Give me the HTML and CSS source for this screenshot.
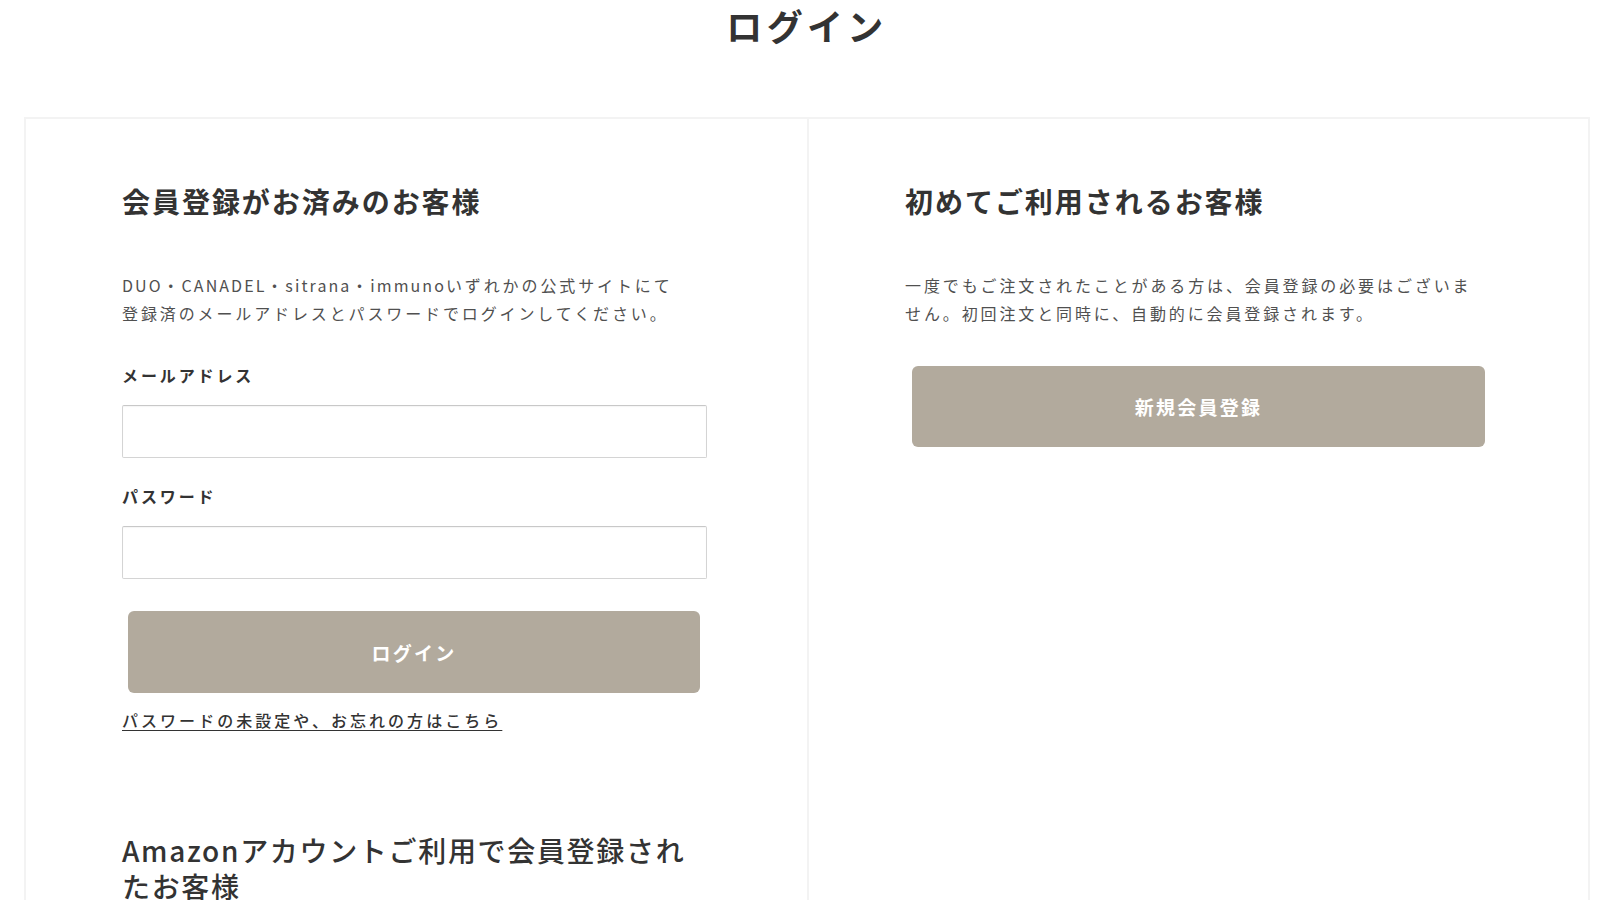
FILE: index.html
```html
<!DOCTYPE html>
<html lang="ja">
<head>
<meta charset="utf-8">
<title>ログイン</title>
<link rel="stylesheet" href="styles.css">
</head>
<body>
<main class="page">
  <h1 class="page-title">ログイン</h1>
  <div class="panels">
    <section class="panel">
      <h2 class="panel-heading">会員登録がお済みのお客様</h2>
      <p class="panel-text"><span class="latin">DUO</span>・<span class="latin">CANADEL</span>・<span class="latin">sitrana</span>・<span class="latin">immuno</span>いずれかの公式サイトにて<br>登録済のメールアドレスとパスワードでログインしてください。</p>
      <form class="login-form">
        <label class="field-label" for="email">メールアドレス</label>
        <input class="field-input" id="email" type="email">
        <label class="field-label field-label-second" for="password">パスワード</label>
        <input class="field-input" id="password" type="password">
        <button class="btn btn-login" type="button">ログイン</button>
      </form>
      <a class="forgot-link" href="#">パスワードの未設定や、お忘れの方はこちら</a>
      <h2 class="panel-heading amazon-heading">Amazonアカウントご利用で会員登録されたお客様</h2>
    </section>
    <section class="panel">
      <h2 class="panel-heading">初めてご利用されるお客様</h2>
      <p class="panel-text">一度でもご注文されたことがある方は、会員登録の必要はございません。初回注文と同時に、自動的に会員登録されます。</p>
      <button class="btn btn-register" type="button">新規会員登録</button>
    </section>
  </div>
</main>
</body>
</html>
```
FILE: styles.css
```css
html, body {
  margin: 0;
  padding: 0;
  background: #ffffff;
}
body {
  font-family: "Noto Sans CJK JP", "Noto Sans", sans-serif;
  color: #333333;
}
.page {
  padding: 0 10px 0 24px;
}
.page-title {
  margin: 0 0 67px;
  font-size: 36px;
  line-height: 50px;
  font-weight: 700;
  letter-spacing: 0.12em;
  text-align: center;
  color: #333333;
}
.panels {
  display: grid;
  grid-template-columns: 1fr 1fr;
  border: 2px solid #f3f3f3;
  border-bottom: none;
  min-height: 800px;
}
.panel {
  padding: 62px 96px 0;
}
.panel + .panel {
  border-left: 2px solid #f3f3f3;
}
.panel-heading {
  margin: 0;
  font-size: 28px;
  line-height: 40px;
  font-weight: 700;
  letter-spacing: 0.07em;
  color: #333333;
  max-width: 590px;
}
.panel-text {
  margin: 50px 0 0;
  font-size: 16px;
  line-height: 28px;
  letter-spacing: 0.18em;
  color: #505050;
  max-width: 580px;
}
.latin {
  letter-spacing: 0.13em;
}
.login-form {
  display: flex;
  flex-direction: column;
  max-width: 585px;
  margin-top: 36px;
}
.field-label {
  font-size: 16px;
  line-height: 24px;
  font-weight: 700;
  letter-spacing: 0.18em;
  color: #333333;
}
.field-label-second {
  margin-top: 26px;
}
.field-input {
  margin-top: 18px;
  height: 53px;
  box-sizing: border-box;
  border: 1px solid #d4d4d4;
  border-top-color: #c8c8c8;
  border-radius: 2px;
  box-shadow: inset 0 1px 1px rgba(0, 0, 0, 0.04);
  padding: 0 12px;
  font-size: 16px;
  background: #ffffff;
}
.btn {
  display: block;
  box-sizing: border-box;
  border: none;
  border-radius: 6px;
  background: #b2aa9d;
  color: #ffffff;
  font-family: inherit;
  font-size: 19px;
  font-weight: 700;
  letter-spacing: 0.12em;
  text-align: center;
  cursor: pointer;
}
.btn-login {
  margin: 32px 7px 0 6px;
  height: 82px;
}
.btn-register {
  margin-top: 39px;
  margin-left: 7px;
  width: 573px;
  height: 81px;
}
.forgot-link {
  display: inline-block;
  margin-top: 15px;
  font-size: 16px;
  line-height: 24px;
  font-weight: 500;
  letter-spacing: 0.19em;
  color: #333333;
  text-decoration: underline;
  text-underline-offset: 3px;
}
.amazon-heading {
  margin-top: 100px;
  line-height: 36px;
  letter-spacing: 0.06em;
  font-weight: 500;
  max-width: 572px;
}
```
